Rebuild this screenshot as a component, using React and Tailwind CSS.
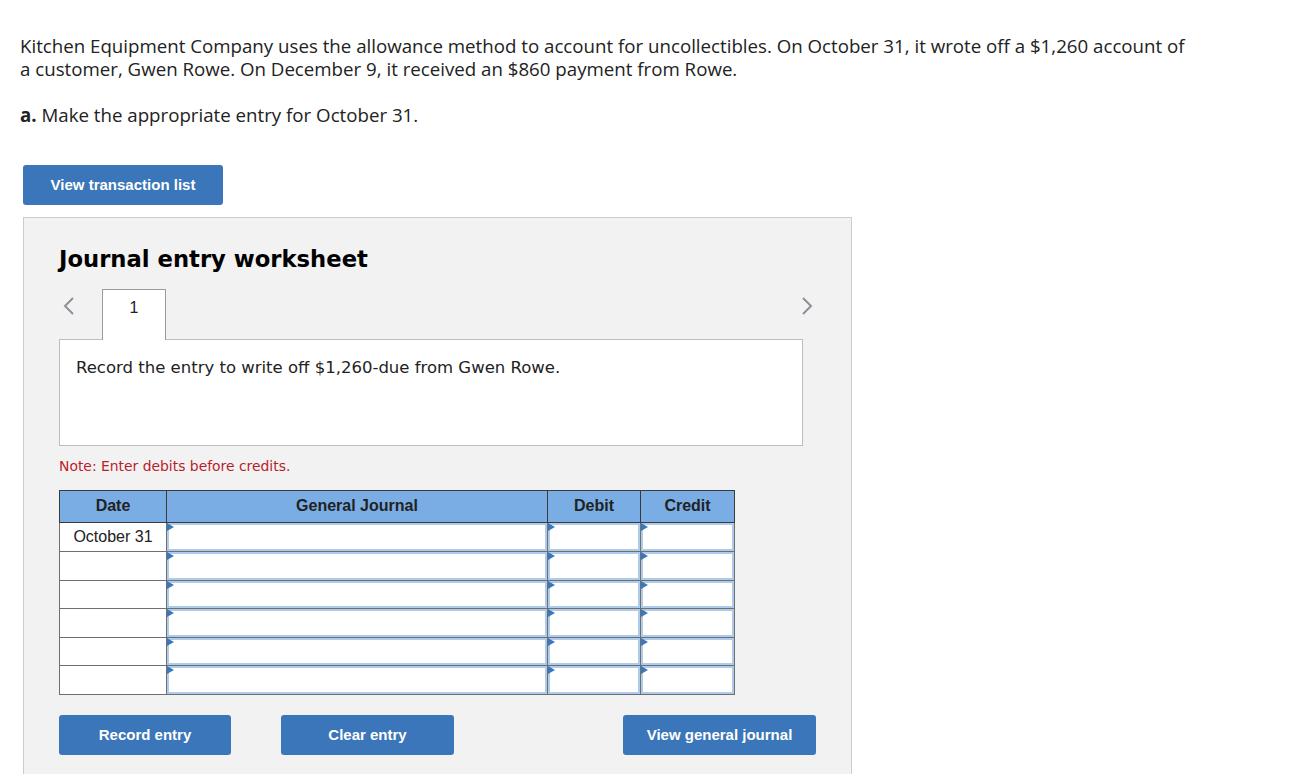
import React from 'react';

// journal worksheet rows: only the first one carries a date
const rows = [
  { date: 'October 31', h: 'h-[29px]', box: 'h-[28px]' },
  { date: '', h: 'h-[29px]', box: 'h-[28px]' },
  { date: '', h: 'h-[28px]', box: 'h-[27px]' },
  { date: '', h: 'h-[29px]', box: 'h-[28px]' },
  { date: '', h: 'h-[28px]', box: 'h-[27px]' },
  { date: '', h: 'h-[29px]', box: 'h-[28px]' },
];

const EntryCell = ({ box }) => (
  <td className="p-0 border border-[#6f6f6f] align-top">
    <div className={`relative w-full bg-white border-2 border-[#aecbec] ${box}`}>
      <span className="absolute -left-[2px] -top-[2px] w-0 h-0 border-y-[4px] border-y-transparent border-l-[7px] border-l-[#3b78bb]" />
    </div>
  </td>
);

const BlueButton = ({ children, className = '' }) => (
  <button
    className={`h-10 rounded-[3px] bg-[#3a76b9] text-white text-[15px] font-bold font-['Liberation_Sans',Arial,sans-serif] ${className}`}
  >
    {children}
  </button>
);

const Chevron = ({ dir }) => (
  <svg width="12" height="20" viewBox="0 0 12 20" fill="none">
    <path
      d={dir === 'left' ? 'M10 2 L2 10 L10 18' : 'M2 2 L10 10 L2 18'}
      stroke="#8c9099"
      strokeWidth="2"
    />
  </svg>
);

export default function App() {
  return (
    <div className="min-h-screen bg-white text-[#222] font-['Open_Sans','Liberation_Sans',sans-serif]">
      <div className="pl-5 pt-[34px]">
        <p className="text-[18.7px] leading-[23px]">
          Kitchen Equipment Company uses the allowance method to account for uncollectibles. On October 31, it wrote off a $1,260 account of
          <br />
          a customer, Gwen Rowe. On December 9, it received an $860 payment from Rowe.
        </p>
        <p className="text-[18.7px] leading-[23px] mt-[23px]">
          <span className="font-bold">a.</span> Make the appropriate entry for October 31.
        </p>
      </div>

      <div className="pl-[23px] mt-[39px]">
        <BlueButton className="w-[200px]">View transaction list</BlueButton>

        <div className="mt-[12px] w-[829px] h-[560px] bg-[#f2f2f2] border border-[#cccccc] pl-[35px] pt-[24px]">
          <h2 className="text-[22.7px] font-bold text-black font-['DejaVu_Sans',Verdana,sans-serif]">
            Journal entry worksheet
          </h2>

          <div className="flex items-end mt-[13px] w-[754px]">
            <div className="w-[43px] pb-[23px] flex justify-start pl-[4px]">
              <Chevron dir="left" />
            </div>
            <div className="w-[64px] h-[51px] bg-white border border-b-0 border-[#9a9a9a] -mb-px relative z-10 flex justify-center pt-[6px] text-[16px] font-['Liberation_Sans',Arial,sans-serif]">
              1
            </div>
            <div className="flex-1 flex justify-end pb-[23px]">
              <Chevron dir="right" />
            </div>
          </div>

          <div className="w-[744px] h-[107px] bg-white border border-[#bdbdbd] pl-4 pt-[16px] text-[16.5px] font-['DejaVu_Sans',Verdana,sans-serif]">
            Record the entry to write off $1,260-due from Gwen Rowe.
          </div>

          <p className="mt-[10px] text-[13.9px] text-[#b81d2c] font-['DejaVu_Sans',Verdana,sans-serif]">
            Note: Enter debits before credits.
          </p>

          <table className="mt-[13px] border-collapse border border-[#6f6f6f] font-['Liberation_Sans',Arial,sans-serif] text-[16px]">
            <thead>
              <tr className="h-[32px] bg-[#79ade4] font-bold text-[#222]">
                <th className="w-[107px] border border-[#3a3a3a] font-bold">Date</th>
                <th className="w-[381px] border border-[#3a3a3a] font-bold">General Journal</th>
                <th className="w-[93px] border border-[#3a3a3a] font-bold">Debit</th>
                <th className="w-[94px] border border-[#3a3a3a] font-bold">Credit</th>
              </tr>
            </thead>
            <tbody>
              {rows.map((r, i) => (
                <tr key={i} className={r.h}>
                  <td className="bg-white border border-[#6f6f6f] text-center text-[#222] p-0">{r.date}</td>
                  <EntryCell box={r.box} />
                  <EntryCell box={r.box} />
                  <EntryCell box={r.box} />
                </tr>
              ))}
            </tbody>
          </table>

          <div className="flex mt-[20px]">
            <BlueButton className="w-[172px]">Record entry</BlueButton>
            <BlueButton className="w-[173px] ml-[50px]">Clear entry</BlueButton>
            <BlueButton className="w-[193px] ml-[169px]">View general journal</BlueButton>
          </div>
        </div>
      </div>
    </div>
  );
}
